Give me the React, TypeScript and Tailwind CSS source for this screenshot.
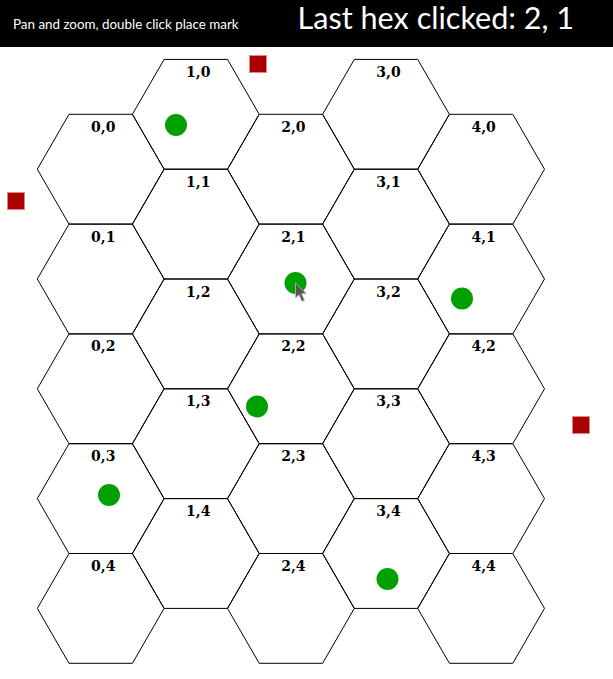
import React from "react";

const R = 63.4;
const H = 54.9;
const X0 = 100.7;
const Y0 = 169.2;

function hexPoints(cx: number, cy: number) {
  const p = [
    [cx - R, cy],
    [cx - R / 2, cy - H],
    [cx + R / 2, cy - H],
    [cx + R, cy],
    [cx + R / 2, cy + H],
    [cx - R / 2, cy + H],
  ];
  return p.map((q) => `${q[0].toFixed(2)},${q[1].toFixed(2)}`).join(" ");
}

const hexes: { c: number; r: number; cx: number; cy: number }[] = [];
for (let c = 0; c < 5; c++) {
  for (let r = 0; r < 5; r++) {
    const cx = X0 + 1.5 * R * c;
    const cy = Y0 + 2 * H * r - (c % 2 === 1 ? H : 0);
    hexes.push({ c, r, cx, cy });
  }
}

const dots = [
  [176, 125],
  [295.5, 283],
  [462, 298.5],
  [257, 406.5],
  [109, 495],
  [387.5, 579],
];

const squares = [
  [249.5, 55.5],
  [7.5, 192.5],
  [572.5, 416.5],
];

export default function App() {
  return (
    <div className="w-[613px] h-[679px] bg-white overflow-hidden flex flex-col">
      <div className="h-[47px] bg-black flex items-baseline text-white font-['Lato',sans-serif] shrink-0">
        <span className="ml-[13px] text-[13.4px] leading-none">
          Pan and zoom, double click place mark
        </span>
        <span className="ml-[59px] text-[30.6px] leading-[35px]">
          Last hex clicked: 2, 1
        </span>
      </div>
      <svg width={613} height={632} viewBox="0 47 613 632" className="block">
        {hexes.map((h) => (
          <polygon
            key={`${h.c}-${h.r}`}
            points={hexPoints(h.cx, h.cy)}
            fill="none"
            stroke="#000"
            strokeWidth={1}
          />
        ))}
        {hexes.map((h) => (
          <text
            key={`t${h.c}-${h.r}`}
            x={h.cx + 2.5}
            y={h.cy - H + 17.5}
            textAnchor="middle"
            fontFamily="'DejaVu Serif', serif"
            fontWeight="bold"
            fontSize={14}
            fill="#000"
          >
            {h.c},{h.r}
          </text>
        ))}
        {dots.map((d, i) => (
          <circle key={`d${i}`} cx={d[0]} cy={d[1]} r={11} fill="#00a000" />
        ))}
        {squares.map((s, i) => (
          <rect
            key={`s${i}`}
            x={s[0]}
            y={s[1]}
            width={17}
            height={17}
            fill="#aa0000"
            stroke="#dd8888"
            strokeWidth={1}
          />
        ))}
        <path
          d="M295.5 283 L295.5 298 L299 294.8 L302 301.5 L304.5 300.3 L301.6 293.8 L306.3 293.6 Z"
          fill="#555"
          stroke="#bbb"
          strokeWidth={0.8}
          strokeLinejoin="round"
        />
      </svg>
    </div>
  );
}
